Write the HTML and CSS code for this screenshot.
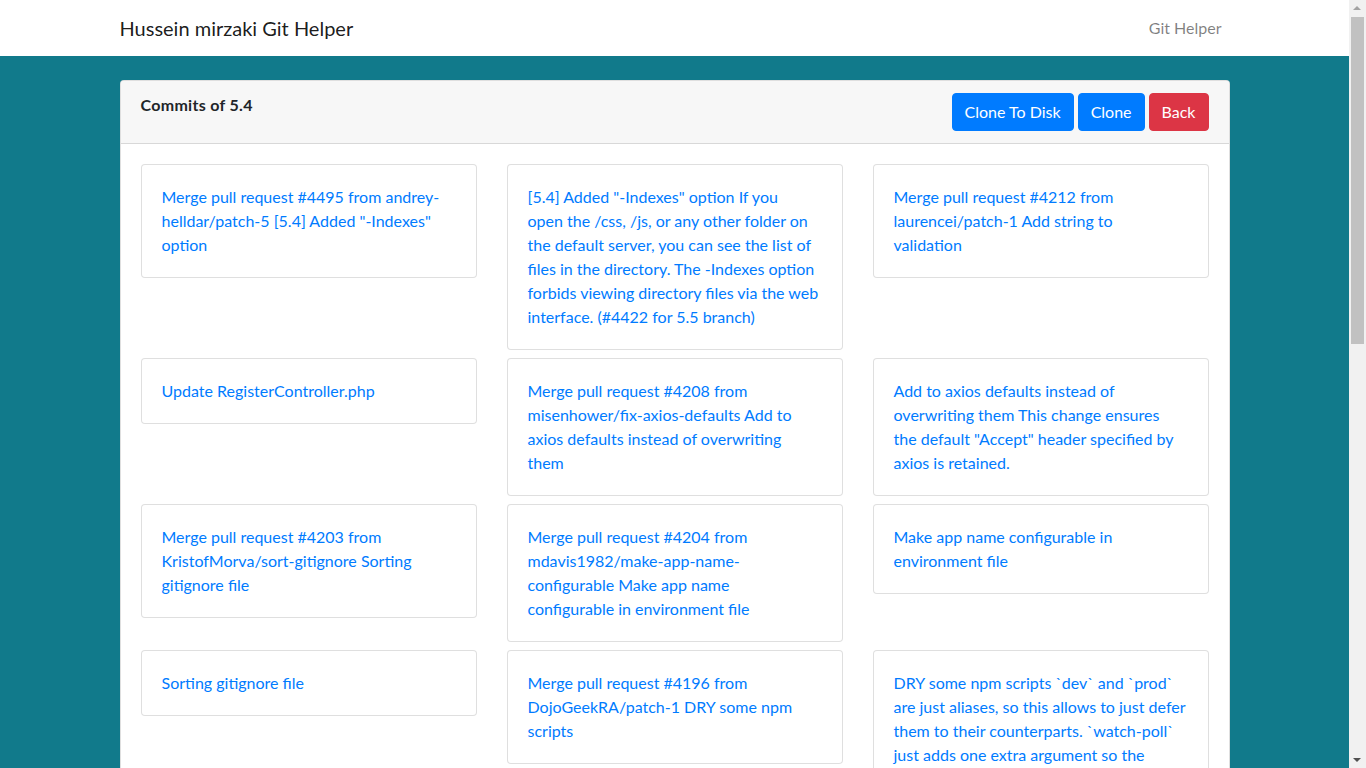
FILE: index.html
```html
<!DOCTYPE html>
<html lang="en">
<head>
<meta charset="utf-8">
<title>Hussein mirzaki Git Helper</title>
<link rel="stylesheet" href="styles.css">
</head>
<body>
<nav class="navbar">
  <div class="container nav-inner">
    <a class="brand" href="#">Hussein mirzaki Git Helper</a>
    <a class="nav-link" href="#">Git Helper</a>
  </div>
</nav>
<main class="main">
  <div class="container">
    <div class="card">
      <div class="card-header">
        <div class="card-title">Commits of 5.4</div>
        <div class="actions">
          <a class="btn btn-primary" href="#">Clone To Disk</a>
          <a class="btn btn-primary" href="#">Clone</a>
          <a class="btn btn-danger" href="#">Back</a>
        </div>
      </div>
      <div class="card-body">
        <div class="commits">
          <div class="commit"><a href="#">Merge pull request #4495 from andrey-<br>helldar/patch-5 [5.4] Added "-Indexes"<br>option</a></div>
          <div class="commit"><a href="#">[5.4] Added "-Indexes" option If you<br>open the /css, /js, or any other folder on<br>the default server, you can see the list of<br>files in the directory. The -Indexes option<br>forbids viewing directory files via the web<br>interface. (#4422 for 5.5 branch)</a></div>
          <div class="commit"><a href="#">Merge pull request #4212 from<br>laurencei/patch-1 Add string to<br>validation</a></div>

          <div class="commit"><a href="#">Update RegisterController.php</a></div>
          <div class="commit"><a href="#">Merge pull request #4208 from<br>misenhower/fix-axios-defaults Add to<br>axios defaults instead of overwriting<br>them</a></div>
          <div class="commit"><a href="#">Add to axios defaults instead of<br>overwriting them This change ensures<br>the default "Accept" header specified by<br>axios is retained.</a></div>

          <div class="commit"><a href="#">Merge pull request #4203 from<br>KristofMorva/sort-gitignore Sorting<br>gitignore file</a></div>
          <div class="commit"><a href="#">Merge pull request #4204 from<br>mdavis1982/make-app-name-<br>configurable Make app name<br>configurable in environment file</a></div>
          <div class="commit"><a href="#">Make app name configurable in<br>environment file</a></div>

          <div class="commit"><a href="#">Sorting gitignore file</a></div>
          <div class="commit"><a href="#">Merge pull request #4196 from<br>DojoGeekRA/patch-1 DRY some npm<br>scripts</a></div>
          <div class="commit"><a href="#">DRY some npm scripts `dev` and `prod`<br>are just aliases, so this allows to just defer<br>them to their counterparts. `watch-poll`<br>just adds one extra argument so the<br>same logic can be applied there.</a></div>

          <div class="commit"><a href="#">Merge pull request #4190 from tillkruss/patch-2 Remove unused path</a></div>
          <div class="commit"><a href="#">Remove unused path</a></div>
          <div class="commit"><a href="#">Merge pull request #4187 from pmochine/patch-1 Update web.config</a></div>

          <div class="commit"><a href="#">Update web.config</a></div>
          <div class="commit"><a href="#">Merge pull request #4183 from sebastiandedeyne/patch-1 Add lang attribute</a></div>
          <div class="commit"><a href="#">Add lang attribute</a></div>

          <div class="commit"><a href="#">Merge pull request #4180 from ntzm/patch-1 Use pluck on collection</a></div>
          <div class="commit"><a href="#">Use pluck on collection</a></div>
          <div class="commit"><a href="#">Merge branch '5.3' into 5.4</a></div>

          <div class="commit"><a href="#">Merge pull request #4176 from robinvdvleuten/patch-3 Remove trailing whitespace</a></div>
          <div class="commit"><a href="#">Remove trailing whitespace</a></div>
          <div class="commit"><a href="#">Update composer.json</a></div>

          <div class="commit"><a href="#">Merge pull request #4170 from jdrieghe/patch-1 Fix typo in comment</a></div>
          <div class="commit"><a href="#">Fix typo in comment</a></div>
          <div class="commit"><a href="#">Merge pull request #4166 from vlakoff/cleanup Cleanup config files</a></div>

          <div class="commit"><a href="#">Cleanup config files</a></div>
          <div class="commit"><a href="#">Merge pull request #4160 from laravel/revert-4159 Revert queue changes</a></div>
          <div class="commit"><a href="#">Revert queue changes</a></div>
        </div>
      </div>
    </div>
  </div>
</main>
<div class="scrollbar" aria-hidden="true">
  <span class="sb-arrow sb-up"></span>
  <span class="sb-thumb"></span>
  <span class="sb-arrow sb-down"></span>
</div>
</body>
</html>
```
FILE: styles.css
```css
* { box-sizing: border-box; }
html, body { margin: 0; padding: 0; }
body {
  font-family: Lato, "Liberation Sans", sans-serif;
  font-size: 16px;
  line-height: 1.5;
  color: #212529;
  background: #117a8b;
  padding-right: 17px;
}
a { text-decoration: none; }
.container {
  width: 1140px;
  margin: 0 auto;
  padding: 0 15px;
}
.navbar {
  background: #fff;
  height: 56px;
}
.nav-inner {
  display: flex;
  align-items: center;
  justify-content: space-between;
  height: 56px;
}
.brand {
  font-size: 20px;
  line-height: 30px;
  color: rgba(0,0,0,.9);
}
.nav-link {
  padding: 8px;
  color: rgba(0,0,0,.5);
}
.main { padding: 24px 0; }
.card {
  background: #fff;
  border: 1px solid rgba(0,0,0,.125);
  border-radius: 4px;
}
.card-header {
  display: flex;
  justify-content: space-between;
  align-items: flex-start;
  padding: 12px 20px;
  background: #f7f7f7;
  border-bottom: 1px solid rgba(0,0,0,.125);
  border-radius: 3px 3px 0 0;
}
.card-title {
  font-weight: 700;
  line-height: 24px;
  color: #212529;
  letter-spacing: 0.3px;
}
.actions {
  display: flex;
  gap: 4px;
}
.btn {
  display: inline-block;
  padding: 6px 12px;
  font-size: 16px;
  line-height: 24px;
  border: 1px solid transparent;
  border-radius: 4px;
  color: #fff;
}
.btn-primary { background: #007bff; border-color: #007bff; }
.btn-danger { background: #dc3545; border-color: #dc3545; }
.card-body { padding: 20px; }
.commits {
  display: grid;
  grid-template-columns: repeat(3, 336px);
  column-gap: 30px;
  row-gap: 8px;
  align-items: start;
}
.commit {
  border: 1px solid rgba(0,0,0,.125);
  border-radius: 4px;
  padding: 20px;
  background: #fff;
}
.commit a { color: #007bff; }

/* classic window scrollbar, drawn over the right edge */
.scrollbar {
  position: fixed;
  top: 0;
  right: 0;
  width: 17px;
  height: 100vh;
  background: #f1f1f1;
}
.sb-arrow {
  position: absolute;
  left: 4px;
  width: 0;
  height: 0;
  border-left: 4px solid transparent;
  border-right: 4px solid transparent;
}
.sb-up {
  top: 6px;
  border-bottom: 4px solid #a3a3a3;
}
.sb-down {
  bottom: 6px;
  border-top: 4px solid #505050;
}
.sb-thumb {
  position: absolute;
  top: 17px;
  left: 2px;
  right: 2px;
  height: 327px;
  background: #c1c1c1;
}
```
